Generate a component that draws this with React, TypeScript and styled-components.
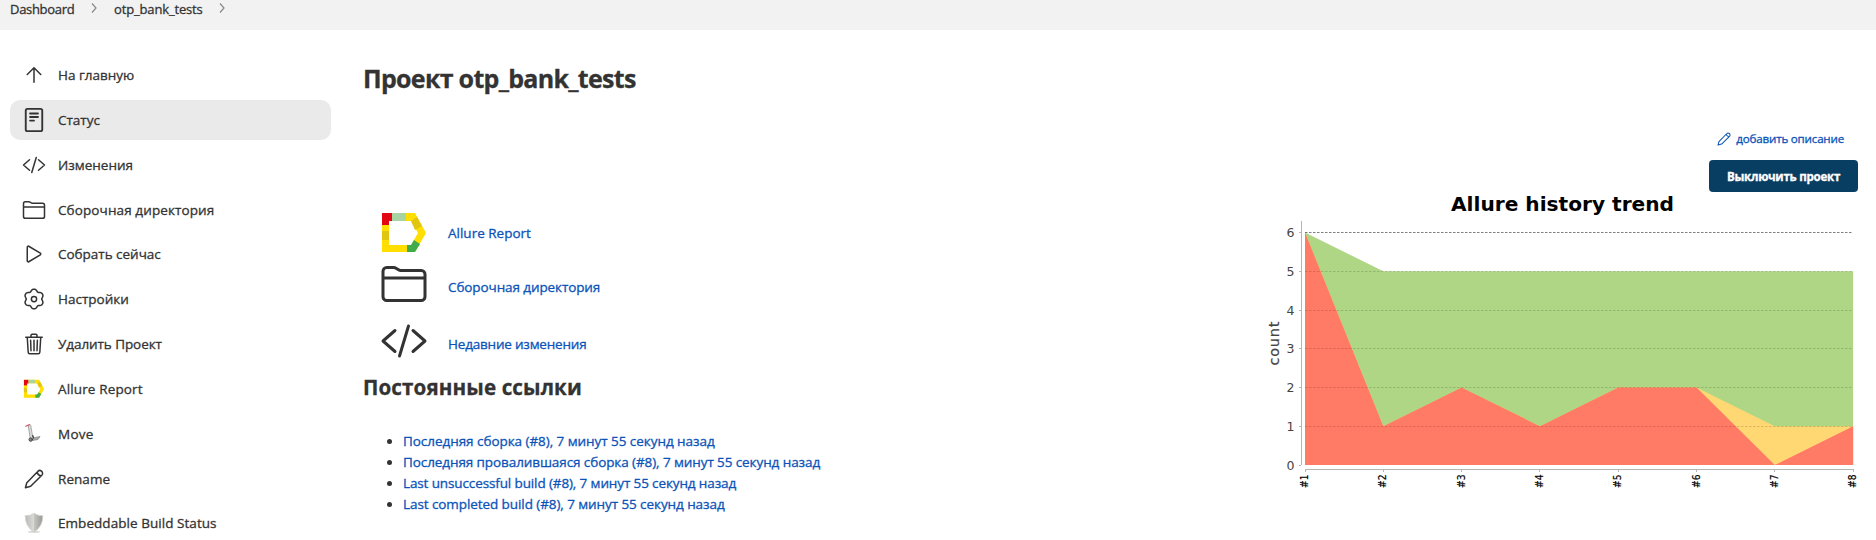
import React from "react";
import styled, { createGlobalStyle } from "styled-components";

const Global = createGlobalStyle`
  *{box-sizing:border-box}
  body{margin:0;background:#fff;color:#333;font:500 13.5px/20px "Open Sans","Noto Sans",sans-serif;overflow:hidden;-webkit-text-stroke:.3px}
  ul,h1,h2{margin:0;padding:0}
`;
const Crumbs = styled.nav`height:30px;background:#f2f2f2;padding-left:10px;display:flex;align-items:flex-start;font-size:13px;`;
const Crumb = styled.a<{ $w: number; $ls?: number }>`
  width:${p => p.$w}px;line-height:18px;white-space:nowrap;letter-spacing:${p => p.$ls ?? 0}px;
`;
const Chevron = styled.svg`width:6px;height:10px;margin:3px 17px 0 16px;flex:none;fill:none;stroke:#888;stroke-width:1.2;`;
const Body = styled.div`display:flex;height:510px;`;
const Side = styled.aside`width:331px;padding:25px 0 0 10px;display:flex;flex-direction:column;gap:4.85px;flex:none;`;
const Task = styled.a<{ $active?: boolean; $ls?: number }>`
  height:40px;flex:none;display:flex;align-items:center;gap:12px;padding-left:12px;border-radius:10px;
  background:${p => (p.$active ? "#eaeaea" : "transparent")};letter-spacing:${p => p.$ls ?? 0}px;white-space:nowrap;
`;
const Icon = styled.svg<{ $s: number; $w?: number }>`
  width:${p => p.$s}px;height:${p => p.$s}px;flex:none;fill:none;stroke:currentColor;stroke-width:${p => p.$w ?? 32};
  stroke-linecap:round;stroke-linejoin:round;overflow:visible;
`;
const IconSlot = styled.span`width:24px;display:flex;justify-content:center;flex:none;`;
const Main = styled.main`flex:1;display:flex;justify-content:space-between;padding-left:32px;`;
const Left = styled.section`width:600px;`;
const Title = styled.h1`font-size:25px;line-height:36px;font-weight:700;padding-top:30px;letter-spacing:-0.7px;white-space:nowrap;`;
const Links = styled.div`padding:110px 0 0 17px;display:flex;flex-direction:column;`;
const BigLink = styled.a<{ $h: number; $ls?: number; $lift?: number }>`
  height:${p => p.$h}px;display:flex;align-items:center;gap:20px;color:#0b53b9;letter-spacing:${p => p.$ls ?? 0}px;
  svg{color:#333;margin-bottom:${p => p.$lift ?? 0}px}
`;
const Sub = styled.h2`font-size:20.6px;line-height:30px;font-weight:700;margin-top:-2px;letter-spacing:.12px;`;
const List = styled.ul`margin-top:29px;padding-left:40px;line-height:21px;`;
const Li = styled.li<{ $ls?: number }>`white-space:nowrap;letter-spacing:${p => p.$ls ?? 0}px;a{color:#0b53b9}`;
const Right = styled.section`width:612px;display:flex;flex-direction:column;align-items:flex-end;padding:99px 18px 0 0;`;
const Describe = styled.a`display:flex;align-items:center;gap:5px;color:#0b53b9;font-size:11.6px;letter-spacing:-.2px;margin-right:14px;height:20px;`;
const Disable = styled.button`
  width:149px;height:32px;margin-top:11px;border:0;border-radius:4px;background:#083e62;color:#fff;padding:0;
  font:700 11.6px "Open Sans","Noto Sans",sans-serif;letter-spacing:-0.27px;
`;
const Chart = styled.svg`width:600px;height:310px;margin-top:-3px;flex:none;font-family:"DejaVu Sans",sans-serif;-webkit-text-stroke:0;`;

const gearPath = Array.from({ length: 72 }, (_, i) => {
  const a = (i * Math.PI) / 36;
  const r = 190 + 22 * Math.cos(6 * a) - 3 * Math.cos(12 * a);
  return `${i ? "L" : "M"}${(256 + r * Math.sin(a)).toFixed(1)} ${(256 - r * Math.cos(a)).toFixed(1)}`;
}).join("") + "zM312 256a56 56 0 11-112 0 56 56 0 01112 0";

const D = {
  up: "M112 244l144-144 144 144M256 110v302",
  code: "M160 368L32 256l128-112M352 368l128-112-128-112M304 96l-96 320",
  folder: "M440 432H72a40 40 0 01-40-40V120a40 40 0 0140-40h75.89a40 40 0 0122.19 6.72l27.84 18.56a40 40 0 0022.19 6.72H440a40 40 0 0140 40v240a40 40 0 01-40 40zM32 192h448",
  play: "M112 111v290c0 17.44 17 28.52 31 20.16l247.9-148.37c12.12-7.25 12.12-26.33 0-33.58L143 90.84c-14-8.36-31 2.72-31 20.16z",
  trash: "M112 112l20 320c.95 18.49 14.4 32 32 32h184c17.67 0 30.87-13.51 32-32l20-320M80 112h352M192 112V72a24 24 0 0124-24h80a24 24 0 0124 24v40M256 176v224M184 176l8 224M328 176l-8 224",
  doc: "M118 18h276q38 0 38 38v400q0 38-38 38H118q-38 0-38-38V56q0-38 38-38zM172 116h168M172 192h168M172 268h84",
  gear: gearPath,
  pencil: "M36 478L72 352 352 64C376 36 414 26 448 54C486 88 482 130 456 158L170 442zM336 80q14 84 104 96",
};
const Line = ({ d, s = 24, w }: { d: string; s?: number; w?: number }) => (
  <Icon viewBox="0 0 512 512" $s={s} $w={w}><path d={d} /></Icon>
);
const Allure = ({ s }: { s: number }) => (
  <Icon viewBox="0 0 48 48" $s={s}>
    <g stroke="none">
      <path fill="#ffde00" d="M2 4h33l11 20-11 19H2z" />
      <path fill="#e30613" d="M2 4h10v12H2z" /><path fill="#a8d3a2" d="M12 4h14v8H12z" />
      <path fill="#e2c510" d="M2 22h7v9H2z" />
      <path fill="#fff" d="M9 12h22l7 12-7 12H9z" />
      <path fill="#e2c510" d="M31 12l6-4 5 9-7 4z" /><path fill="#3fac49" d="M27 36h4l3-5 6 4-5 8h-8z" />
    </g>
  </Icon>
);
const Mover = () => (
  <Icon viewBox="0 0 24 24" $s={24} $w={1}>
    <path stroke="#ddd" strokeWidth="2.4" d="M7.5 4l1.8 12" /><path stroke="#777" strokeWidth=".6" d="M6.3 4l2 13M8.7 3l2 12" />
    <path stroke="#d2565b" strokeWidth="1.2" d="M3.8 4.2L7.5 2.6" /><path fill="#aaa" stroke="#888" strokeWidth=".8" d="M11 16l7-1.5-2 3-6 1z" />
    <path stroke="#333" strokeWidth="1.2" d="M10.8 13.5l.6 2.5" />
    <circle cx="8.7" cy="17.6" r="1.7" fill="#888" stroke="#444" />
  </Icon>
);
const Shield = () => (
  <Icon viewBox="0 0 24 24" $s={24} $w={0.7}>
    <defs><linearGradient id="sh"><stop stopColor="#b9bab6" /><stop offset=".48" stopColor="#d9dad6" /><stop offset=".52" stopColor="#c4c5c1" /><stop offset="1" stopColor="#989995" /></linearGradient></defs>
    <ellipse cx="12" cy="20.8" rx="6.5" ry="1.2" fill="#ddd" stroke="none" />
    <path fill="url(#sh)" stroke="#d2d2d0" d="M3.2 4.8q5 0 8.8-2.6 3.8 2.6 8.8 2.6 0 11-8.8 16.4-8.8-5.4-8.8-16.4z" />
  </Icon>
);

const X = (i: number) => 47 + i * 78.3;
const Y = (v: number) => 276 - v * 38.75;
const area = (v: number[]) => `M${X(0)} ${Y(0)} ` + v.map((n, i) => `L${X(i)} ${Y(n)}`).join(" ") + ` L${X(v.length - 1)} ${Y(0)}z`;
const Trend = () => (
  <Chart viewBox="0 0 600 310">
    <text x="304.5" y="21.5" textAnchor="middle" fontWeight="700" fontSize="20" textLength="223" lengthAdjust="spacingAndGlyphs">Allure history trend</text>
    <path fill="#aed685" d={area([6, 5, 5, 5, 5, 5, 5, 5])} />
    <path fill="#ffd873" d={area([6, 1, 2, 1, 2, 2, 1, 1])} />
    <path fill="#ff7b65" d={area([6, 1, 2, 1, 2, 2, 0, 1])} />
    {[1, 2, 3, 4, 5, 6].map(v => (
      <path key={v} d={`M47 ${Math.floor(Y(v)) + 0.5}h548`} stroke="#000" strokeOpacity={v === 6 ? 0.5 : 0.15} strokeDasharray="2.5 1.5" />
    ))}
    <path d="M43.5 32v244M47 280.5h549" stroke="#b5b5b5" fill="none" />
    {[0, 1, 2, 3, 4, 5, 6].map(v => (
      <g key={v}><path d={`M41 ${Math.floor(Y(v)) + 0.5}h2`} stroke="#b5b5b5" />
        <text x="36.5" y={Y(v) + 4.5} textAnchor="end" fontSize="12.5" fill="#444">{v}</text></g>
    ))}
    {[0, 1, 2, 3, 4, 5, 6, 7].map(i => (
      <g key={i}><path d={`M${Math.floor(X(i)) + 0.5} 281v2`} stroke="#b5b5b5" />
        <text transform={`translate(${X(i) + 3} 299) rotate(-90)`} fontSize="10" textLength="13.5" lengthAdjust="spacingAndGlyphs" fill="#000" stroke="#000" strokeWidth=".2">{`#${i + 1}`}</text></g>
    ))}
    <text transform="translate(21 176.5) rotate(-90)" fontSize="14.5" fill="#444" textLength="44" stroke="#444" strokeWidth=".2">count</text>
  </Chart>
);

export default function App() {
  return (
    <>
      <Global />
      <Crumbs>
        <Crumb $w={65} $ls={-0.3}>Dashboard</Crumb>
        <Chevron viewBox="0 0 6 10"><path d="M1 .5l4 4.5-4 4.5" /></Chevron>
        <Crumb $w={89} $ls={-0.15}>otp_bank_tests</Crumb>
        <Chevron viewBox="0 0 6 10"><path d="M1 .5l4 4.5-4 4.5" /></Chevron>
      </Crumbs>
      <Body>
        <Side>
          <Task><Line d={D.up} />На главную</Task>
          <Task $active><Line d={D.doc} w={40} />Статус</Task>
          <Task><Line d={D.code} />Изменения</Task>
          <Task $ls={0.11}><Line d={D.folder} />Сборочная директория</Task>
          <Task $ls={-0.02}><Line d={D.play} />Собрать сейчас</Task>
          <Task><Line d={D.gear} />Настройки</Task>
          <Task $ls={-0.07}><Line d={D.trash} />Удалить Проект</Task>
          <Task $ls={0.14}><IconSlot><Allure s={22} /></IconSlot>Allure Report</Task>
          <Task $ls={0.25}><Mover />Move</Task>
          <Task $ls={0.05}><IconSlot><Line d={D.pencil} s={20} w={38} /></IconSlot>Rename</Task>
          <Task $ls={0.05}><Shield />Embeddable Build Status</Task>
        </Side>
        <Main>
          <Left>
            <Title>Проект otp_bank_tests</Title>
            <Links>
              <BigLink $h={54} $lift={1}><Allure s={48} />Allure Report</BigLink>
              <BigLink $h={54} $ls={-0.1} $lift={6}><Line d={D.folder} s={48} />Сборочная директория</BigLink>
              <BigLink $h={60} $ls={-0.2} $lift={6}><Line d={D.code} s={48} />Недавние изменения</BigLink>
            </Links>
            <Sub>Постоянные ссылки</Sub>
            <List>
              <Li $ls={-0.05}><a>Последняя сборка (#8), 7 минут 55 секунд назад</a></Li>
              <Li $ls={-0.09}><a>Последняя провалившаяся сборка (#8), 7 минут 55 секунд назад</a></Li>
              <Li $ls={-0.12}><a>Last unsuccessful build (#8), 7 минут 55 секунд назад</a></Li>
              <Li $ls={-0.08}><a>Last completed build (#8), 7 минут 55 секунд назад</a></Li>
            </List>
          </Left>
          <Right>
            <Describe><Line d={D.pencil} s={14} w={38} />добавить описание</Describe>
            <Disable>Выключить проект</Disable>
            <Trend />
          </Right>
        </Main>
      </Body>
    </>
  );
}
